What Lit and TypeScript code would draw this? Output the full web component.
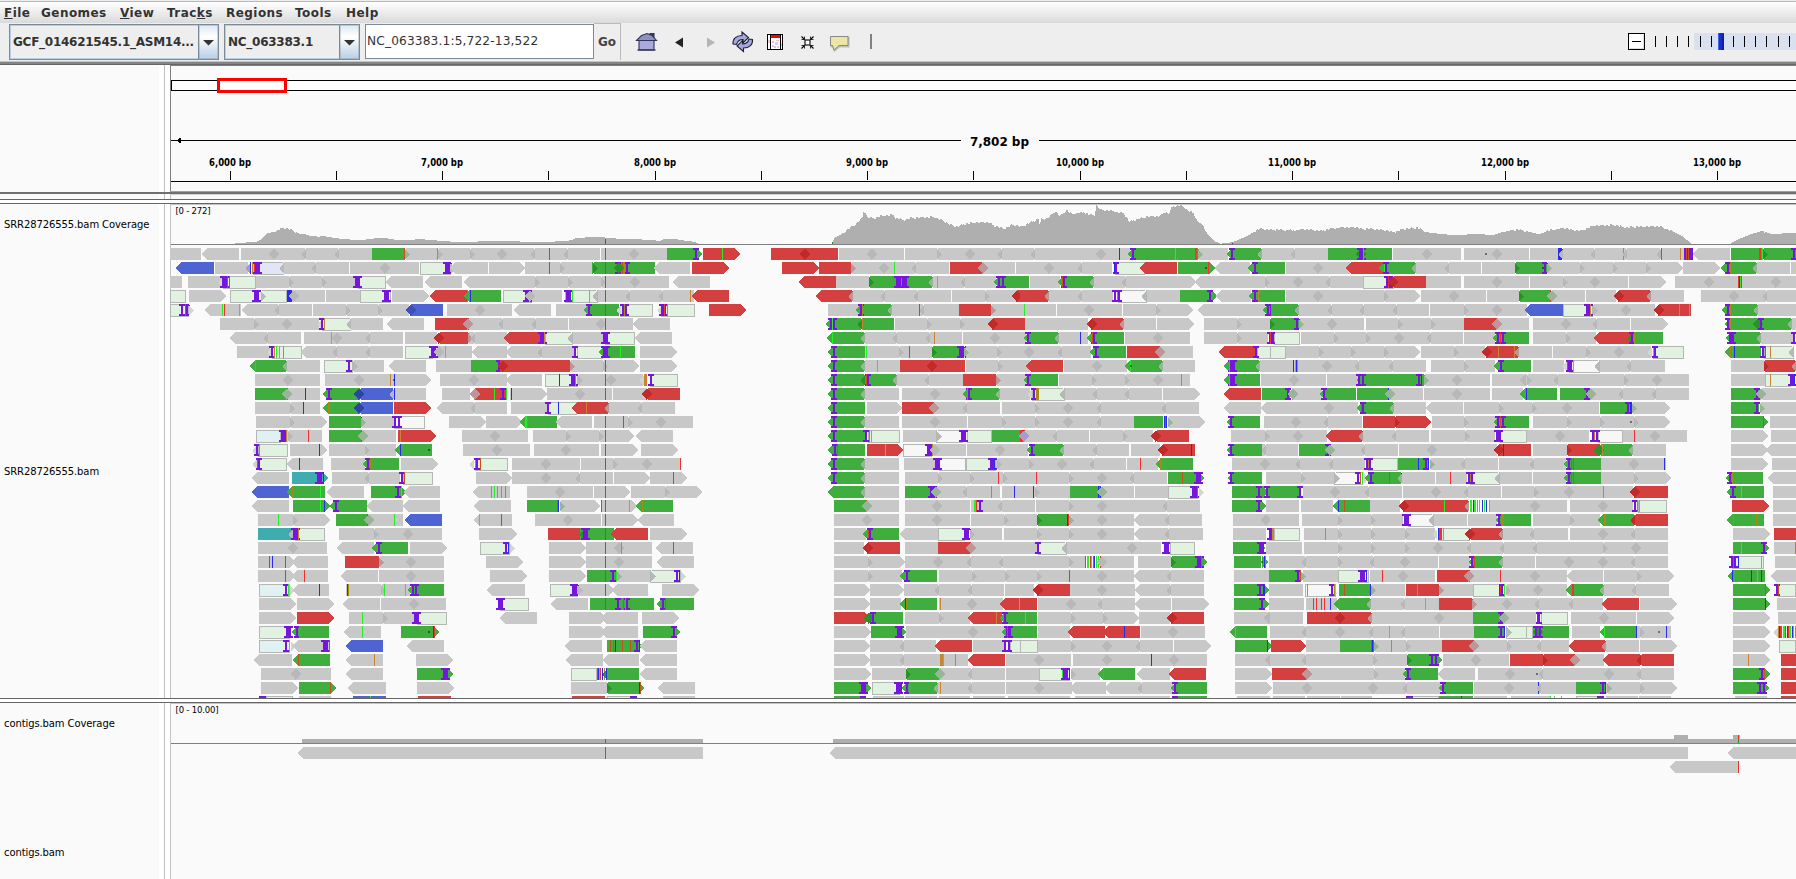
import { LitElement, html, css, svg } from "lit";
import { customElement } from "lit/decorators.js";

/* Packed alignments. Every tile has an x origin; coordinates are thirds of a pixel.
   n g r b t = solid reads, o v c w = outlined reads, < and > mark the strand tip,
   D L R = overlap marks, I W = insertions, k? = mismatches, q = small dot. */
const TILES: { x: number; rows: string[] }[] = [
  { x: 170, rows: [
    "n0-92 n<97-207 n213-606 D311 L408 L506 n703-900 g606-703 kd701 Rg705 ko802 R804",
    "b<18-132 n135-235 n341-537 n540-747 D645 L439 v250-341 Lv240 kb241 ko246 kr252 W260 L341 o751-842 n<850-900 W832 R843",
    "n0-36 n54-155 Lo158 o160-257 ko157 W163 kr170 kd178 n257-563 R357 R456 o563-647 W562 n<648-759 n<766-876 n<884-900",
    "o0-47 n57-168> o181-351 R273 W257 ky350 n355-465 kb352-366 D373 n468-570 o571-663 W649 n665-777> r<781-891 g891-900 LG897",
    "o0-58 I36 I52 kr46 Ro58 n<105-213 kg157 kr163 kg208 n<215-426 L327 n429-717 R527 R625 b<708-819 Db722 n831-900",
    "n150-448 R252 D350 n540-639 o457-543 Lo457 I455 ko462 L543 n<651-762 r795-900 Lr895",
    "n<180-393 L294 n402-699 kg484 D501 L600 n705-800 r<795-900 DX806",
    "n201-300 Lo305 o305-396 I306 ko313 kg319 kg326 ko338 n<393-699 L500 L600 n800-900 o706-790 W790 D806 kg826",
    "g<240-351 ko256 n351-450 Lg351 o463-549 I537 n549-642 R548 n<657-768 n798-900",
    "n255-450 D353 n465-666 D568 ko661 n666-783> kb673 q671 n810-900",
    "g255-351 n351-450 kr350 Dg352 kb406 g<459-570 I477 b<558-669 DB566 n672-768 L671 kb673 n816-900",
    "n255-450 R360 kb400 g<459-570 ky475 b<558-669 DB566 r672-783> n<801-900",
    "n258-470> R360 g477-573 n573-672 kb572 Rg573 w672-765 I675 I687 n837-900",
    "c259-333 W338 ko349 n351-456 R353 kr415 g477-573 n573-678 kr572 Dg578 r684-797> ko690 n876-900",
    "Lo262 o264-353 I260 ko267 n360-471> kb448 n477-678 R586 g<675-786 kb691 q777 n879-900",
    "Lo262 o268-350 kr262 I267 n<351-459 kb388 n483-585 g<579-687 I594 ky601 n693-804>",
    "n<246-357 t366-474> W448 kb458 n486-690 L597 o700-788 I697 kd703",
    "b<246-357 kd262 g<351-465 ky367 kg451 n<471-582 g603-708> I684 kg692 n<702-810",
    "n<246-357 g369-480> kg451 kb463 g<480-591 I498 n<591-699 n<700-810",
    "n264-480> R368 kg325 g498-594 n594-699 kb590 kr592 Dg597 kg673 b<705-816",
    "t264-366 o376-465 L368 W375 ko384 n507-816 R612 D713",
    "n264-471 D369 n<501-612 g<606-714 I627 n720-831>",
    "n264-375> n<366-474 kr298 kb307 kr346 r525-628 n628-822 Rr628 D724",
    "n264-375> n<366-474 kr346 kr403 n<513-624 n627-822 D724",
    "c268-359 I348 kg355 Ro360 n<369-477 kb448 n528-720 kb530 ky533 R634 kg643 kg706 g<714-822 I728 I739",
    "n267-378> n381-492> n<519-630 n633-828 D731",
    "n267-378> r381-492> n537-738 kg577 R640 o740-830 W739",
    "o268-360 kr350 W355 g<366-477 I381 ky388 n<522-633 kg577 g693-807> kb788 kr791 q777",
    "c268-360 I348 kg356 Ro362 n<369-477 W466 kd478 b<528-639 n<711-822",
    "n<252-366 g<369-480 kd385 n<528-639 ko613 n738-849>",
    "n273-483 D378 n<528-639 g741-849> W826",
    "n273-384> g387-498> kd481 n<534-648 n741-852>",
    "kp267-287 o287-368 n387-483 b549-648 kg601 r744-843" ] },
  { x: 450, rows: [
    "n0-450 R60 D157 L255 L354 kr298 n453-651 D553 g651-756> I739 r759-870> kg817 kR466",
    "n<0-114 n117-225> n226-427 kr298 R330 g426-615 RG428 kR466 I505 I530 kd517 ky522 DG508 n<612-720 r726-837>",
    "n0-36 n<42-657 R255 R353 R453 D555 kR466 n<669-780",
    "r0-50 g<42-153 kb61 o160-245 n245-336 W232 D240 o345-444 W355 kg365 kg418 L442 n444-732 L540 L639 kR466 ko721 r<726-837",
    "n0-186 D90 n<192-303 n318-414 g<402-507 I417 kR466 o510-609 Lo512 W521 ky521 Lo635 o634-734 W640 kr643 ko652 r777-888>",
    "r0-54 n57-354 Dr54 L159 L258 n357-549 D453 kR466 n<549-660",
    "r0-57 n57-171 Rr55 L75 r<162-270 o285-368 W275 ko283 L366 n368-460 o465-554 W466 n<555-666",
    "n0-66 n<66-171 n<168-372 L275 o380-460 I376 g<447-555 W466 kg511 n570-681>",
    "n0-63 g63-156 I147 kb154 r150-360 DX160 n360-568> Rr360 R460 kR466 n570-681>",
    "n0-171 D71 n<168-276 o286-384 kb328 W368 ky375 n384-580 R385 D484 kR466 Lo582 o600-684 ko582-592 I602",
    "r<60-171 Dr74 kg133 I160 kg168 n180-291> kb184 n291-486 D390 kR466 n489-590 r<579-690 DX590",
    "n0-171 L74 n183-290 o295-380 I295 kb325 n477-675 r<366-477 ko409 kR466 Lr477 L575",
    "n0-108> n108-216> g<210-321 kg226-231 ky232 n<318-426 n432-729 kR466 kr520 R533 D632",
    "n36-234 D135 n249-552> R348 R447 kR466 n<558-669",
    "n39-240 D140 n252-447 D349 n453-564> kR466 n573-684>",
    "Lo72 o75-173 ko75 I82 kd89 n186-390 D288 n393-690 R489 D591 kR466 kr691",
    "n78-186> n186-489 D289 L390 kR466 n492-600> n600-711> kr670",
    "n<69-180 ko124 kg133 ko142 ko154 ky166 n231-429 D331 n432-540> kR466 n543-756> R645",
    "n<72-183 g231-328 n331-450> kd320 kb325 Rg330 kr454 n456-560> kR466 kg538 g<558-669 ky577",
    "n<72-186 kg88 kr154 n255-453 D354 n456-565> kR466 n<564-672",
    "n87-201> r294-393 g390-492 LG402 W405 kR466 r<483-594 n600-711>",
    "o91-180 I167 kb174 Ro181 n297-408> n408-606 D507 kR466 ko514 n<618-729 kr670",
    "n108-219> n297-408> n408-606 D508 kR466 n<621-732",
    "n120-231> n297-408> g411-500 n502-600 kR466 I488 kg498 Rg500 o600-692 R603 I681 kb688 Ro693",
    "n<111-225 o301-384 n384-492> W373 R384 kR466 n<486-594 n636-747>",
    "o150-236 W149 n<303-414 g420-612 kR466 I505 I530 kd518 ky524 g<621-732 I638 kd645",
    "n<150-261 n357-468> n<454-564 n576-687>",
    "n357-468> n<454-564 g579-690> I672",
    "n<345-456 g471-576> kd481 kd490 kb496 kd517 kd541 I561 kb567 n<570-681",
    "n<348-459 n<459-567 n<570-681",
    "o363-440 kr440 kb444 kg447 kr451 kb457 ky461 g470-567 LG470 kb469 n<570-681",
    "n363-472 g471-582> RG472 kb566 kd569 n<624-735",
    "r366-465 o471-555 kp540-561 n639-735" ] },
  { x: 760, rows: [
    "r33-234 DX136 n237-433 D336 n436-840 R532 D631 L727 L823",
    "r66-177> r177-273 n273-567 Rr273 D373 kg403 L468 r570-667 n667-765 Dr668 n768-840",
    "r<117-228 n228-327 g327-519 RG327 W413 W432 n519-708 Lg519 kg532 L616 g<702-807 I718 I730 n810-840",
    "r<168-279 n279-573 Lr279 L374 L473 n576-770 R675 r<756-840 DX770",
    "n204-303 g<288-396 I303 ky307 n396-597 Lg396 kr478 L493 r597-693 n693-840 Rr693 kg793",
    "g<198-402 I213 I223 kg217 LG305 ko307 n405-700 R502 R600 r<684-795 DX699 n795-840 Lr795",
    "g<201-315 kg217 n315-607 Lg315 L410 L509 ko523 n609-798 D705 g<792-840 I804",
    "g<204-315 I222 n315-516 kg319 R418 kr448 g516-612 n612-840 RG516 W603 Rg612 R711 D808",
    "g<204-315 I222 n315-420 Lg315 kg352 r420-615 DX517 n618-810 R715 r<798-840",
    "g<204-411 I222 I323 LG315 kd318 n411-609 Lg411 L506 r609-708 n708-800 Rr708 g<792-840 I804",
    "g<204-315 I222 n315-417 Lg315 n426-620 D524 g<609-720 I627 ky620 n720-810 Lg720",
    "g<204-315 I222 n321-427> r426-522 n522-720 Dr523 L621 n726-840 R824",
    "g<204-315 I222 n315-417 Lg315 n426-621 n624-840 D524 R725",
    "g<204-315 I222 o325-419 I317 ky326 kg333 n429-528 w529-610 R531 o622-696 W610 g696-785 n795-840 kd781 kb788 kr793 D796",
    "g<204-315 I225 kd232 r321-430> kr364 kg376 w430-515 W506 ky517 n520-618 n621-804 D525 D719 g<804-840 I816",
    "g<204-315 I222 n315-417 Lg315 n432-525 w536-617 W531 o619-708 n708-840 W695 kb702 R710 R807",
    "g<204-315 I222 n315-417 Lg315 n435-840 R533 R630 R729 kr715 kr829",
    "g<204-315 n315-417 Lg315 g435-522 n525-720 W516 Dg528 L622 ko694 n726-840 kb763 kb820 R824",
    "g222-318 n318-417 kd317 Dg322 n435-630 n633-826 D532 kg641 kg644 kr649 I660 L727 n829-840",
    "n222-417 D320 n435-631 D532 n633-830 R733 g831-840",
    "n222-318 g<309-417 kd325 I330 n<420-533 o535-616 n630-726 W618 R630 n732-840 R828",
    "n222-312 r<309-420 DX323 n435-534 r534-633 n633-830 Dr632",
    "n222-434> R323 n435-840 D534 L633 L730",
    "n222-425 R323 g<420-531 I440 n537-840 R636 R735",
    "n222-330> n330-432> n432-732 L537 L635 n735-822 r<819-840",
    "n222-330> n331-424 g<420-531 kb436 ky439 n537-730 ko541 D635 r<720-831 kg778",
    "r222-330> g<318-429 DG326 I338 n435-630 R537 r<624-727 ko709 g<720-831 I734 kg796",
    "n222-333> g333-438> W416 kb424 n438-735 D639 g<726-831 W745 kr740",
    "n222-330> n330-528 L433 r<525-636 n639-732 o750-833 I735 I747",
    "n222-330> n330-625 L433 ko540-549 kg550 ko586 r<624-735 n738-840 L835",
    "n222-333> n336-438 g438-537 n537-735 RG438 Dg539 L635 n738-840",
    "g222-332> W310 o336-420 W414 kb422 g<426-534 I440 ky446 n534-735 Lg534 ko541 L636 n738-840 L835",
    "g222-318 kp300-318 n339-432 n435-531 n537-630 n640-735 n744-840" ] },
  { x: 1020, rows: [
    "n0-330 L45 D243 kb298 g<324-537 I338 kg466 kd526-532 n537-625 Rg534 g<621-726 I635 n726-810 Lg726",
    "n0-277 D86 L185 o285-375 I288 kb283 r<360-471 g474-585> kr564 q558 n<585-690 g<684-795 I705 n798-810",
    "g0-27 n30-120 g<114-222 I133 kd127 n222-527> Lg222 L318 n<525-810 R735",
    "r0-87 n87-280 Lr87 L187 w295-380 I285 ky292 I298 L378 n380-480 g480-592> I571 n<588-693 g<687-795 I705 ko714",
    "n0-109 kg13 n111-307 D208 n309-519> R408 n<534-735 g<729-810 I743",
    "n0-205 r0-15 r<201-312 DX216 n312-408 Lr312 n411-522> n552-750 R651 g750-810 RG750",
    "g<12-117 I24 n117-205 Lg117 kb181 g<201-312 I221 kd217 n315-510 D413 n552-745 R651 o762-810 W752 kr752",
    "n0-213 D27 L125 g<210-318 I228 r321-420 n420-519 Dr421 r<597-708 o712-797 I708",
    "r<18-129 n132-320 D230 g<315-429 kg331 q334 n429-525 Lg429 g<612-720 W635 ko626 n720-810 Lg720",
    "g<12-114 I24 n117-510 R216 R315 D413 ko484 g<612-720 W635 ko626 n723-810",
    "Lo36 o35-134 I41 ky47-57 L132 n134-426 L230 L328 n429-540> r<612-723 g726-810 I804",
    "n0-537 R45 D144 L243 L438 n<612-723 n<724-810",
    "n0-342 R45 D145 L243 g342-430 n443-555> kb432 kr435 kb439 Rg443 g<621-720 I634 n732-810",
    "kr0-8 kb8-12 n16-208 Dv13 L110 n210-400 R309 r<396-507 DX408 n633-810 R735",
    "g<21-132 I36 n132-327 Lg132 L230 n333-420 r<414-525 DX428 kb514 g<621-726 I634 n726-810 L738",
    "n0-318 R28 D125 L221 n321-415 kr361 g<408-519 ky421 n636-810 D735",
    "n0-441 kr49 R148 D245 L341 g444-552> kd487 W533 g<624-726 I633 n738-810",
    "n0-150 kb40 R45 g150-234 n246-343 kr236 kb233 kb240 Dg247 n345-444 o445-535 W521 kd530 Ro536 g636-735 I717 g<729-810 I740",
    "n0-45 n48-540 R148 D247 L440 g636-738> I717 n738-810",
    "n0-50 g51-145 n148-342 RG51 kb142 kr145 Rg148 D247 n<342-546 L448 n639-810 D738",
    "n0-342 R51 R148 D247 n<342-549 L448 n639-738 o748-810 I750 ko758",
    "n0-45 o55-140 I53 L138 n141-423 D335 W438 o450-524 g639-736> W722 n739-810",
    "n0-342 R148 kw195-243 kr196 kg201-206 kr209 kg214 kd218 kb221-226 kg229 kg235 kr241 D247 n354-453 g453-561> RG453 W538 kd543 g642-745> kw722 q726 kb731 ky735 n747-810",
    "n0-342 R51 kr148 D247 n<342-552 L452 n642-747 g747-810",
    "n0-40 r<39-150 DX53 n150-345 D247 n<345-552 L452 g642-747> I720 kb730-735 n747-810",
    "r0-51 n54-345 D152 L247 n<345-454 n456-567> g642-747> I727 n747-810",
    "g0-51 kg16 n54-357> R152 R250 n357-450 r<441-552 DX455 n642-747 n747-810 D746",
    "g0-51 n54-150 r<144-255 r<249-360 kb313 n363-555 D459 g<630-741 kg645 n753-810",
    "o0-53 n54-460 R152 D260 L359 n462-573> g645-756> kb740 r753-810",
    "n0-153 D56 n159-561 D262 kb394 D462 n645-810 D749",
    "n0-55 o58-150 n152-240 kg125 W136 kb146 R152 g<234-345 ky250 n<351-450 r<447-558 n645-755> r756-810",
    "n0-155 D56 n<150-258 n<255-460 L366 g<453-561 I465 n645-756> n759-810",
    "n0-150 n165-360 n360-450 g456-561 kp456-475 n651-750 n760-810" ] },
  { x: 1270, rows: [
    "n0-174 L75 g174-366 DG272 W272 ko280 n369-573 D472 n582-777 D682 q648 n780-810",
    "g0-45 n48-240 D145 r<228-338 g<327-438 kg343 I348 n438-633 Lg438 L536 n636-735 g735-810 RG735",
    "n0-280 D83 L180 o280-372 W355 kr355 r<357-468 DX370 n468-573 n582-777 D681 n780-810",
    "g0-45 n48-450> D145 R342 n453-648 D551 n651-747 g747-810 RG747",
    "g0-87 n87-477 kp0-3 Lg87 L185 L283 L380 n480-770 R582 D681 b<765-810",
    "g0-90 n90-282 RG0 I82 Rg87 D187 n288-582 R385 R483 r582-680 n680-777 Dr681 n789-810",
    "o12-90 I5 kr0 n93-579 R192 R289 D387 L482 n582-675 g<669-777 I684 I698 kr691 n789-810",
    "o0-47 n48-450> R147 R244 R342 n453-645 R552 n747-810 r<636-747 DX650 ko683 ko733 Lr747",
    "n0-468 kb70 kg74 kb78 ko82 D171 L268 L370 n483-675 R583 g<672-783 I692 n789-810",
    "n0-168 D71 n171-265 g<261-465 I268 I280 n465-660 I447 kb454 Rg461 D562 n666-810 D765",
    "g0-60 n66-155 I55 Dg68 g<150-258 I162 g261-357 n357-459 kb354 Dg360 n462-660 D562 n666-760 g<750-810 kb769",
    "n0-265 D176 g<261-372 kd273 I278 n372-468 Lg372 n<468-579 n582-810 R686 R789",
    "n0-276 D79 L175 r279-484> RX375 n486-680 R583 g<672-777 I684 I698 kd690 n789-810",
    "n0-170 D85 r<168-279 n279-477 Lr279 L378 n483-675 R584 o690-770 W685 n789-810",
    "n0-85 g87-175 n180-384 I174 Dg181 L284 n387-582 D486 n582-680 r<672-783 DX688 kb700 n789-810",
    "n0-285 L90 L188 o295-383 I290 ky295 I301 g383-475 n481-684 kb443 I467 kb475 Rg479 L585 n687-810",
    "n0-192 R93 w193-280 R195 I264 kd271 kg275 Ro281 g<285-396 I303 kd358 n396-495 kb394 Lg396 n498-590 kr541 o600-690 I596 ky601 I606 L688 n690-786 n789-810",
    "g0-92 I90 n98-396 D195 L297 n399-693 D498 L594 n696-810 R792",
    "n0-87 n93-190 n300-390 g<189-300 kb203 kd223 r<387-597 DX402 kg523 Lr597 kw597-660 kg599-606 kb608 kg611-617 ko622 kg628 kb637 kg642 kb648 kg656 n660-810 D795",
    "n0-87 n96-400 R205 R303 w415-491 W407 L489 n491-590 n593-680 g<678-783 I687 ky692-701 n789-810",
    "o12-90 kp0-5 ko7 n102-495 ko166 R205 R303 R405 Lo500 o503-600 kb504 kr508-516 kg520 n699-810 r<588-699 DX600 Lr699",
    "n0-96 n102-810 R205 R303 R405 D503 L604 L702",
    "n0-504 L108 R205 L312 D406 n507-600 g<597-699 I606 kd611 n699-795 Lg699 n798-810",
    "g0-90 I84 kd90 n99-205 Rg92 o205-298 W277 kb287 n300-495 kr337 D398 r501-600 n600-810 Dr598 kr691 D795",
    "n0-100 w106-198 ko110 I185 ky192 g207-303 n303-405 kd223 kb299 Rg304 r408-507 ko442 n507-610 Rr507 o610-705 n708-810 kb686 kr690 I697 kg703 R708",
    "n0-102 n108-200 kr130 kr139 kr154 kr163 kb181 g<192-303 ky208 n303-507 Lg303 L405 kg466 r507-610 n610-810 Rr607 D710",
    "n0-100 r111-306 DX209 n306-609 Lr306 D508 g609-695 n700-798 I693 Dg703 I803",
    "n0-507 D209 L108 L308 kg358 L405 n510-612 g612-702 I692 kb702 o709-790 R712 kr788 W797",
    "r3-108> n108-210 g210-306 n312-515 kr302 kb306 kr310 Rg312 ko364 R408 r516-612 n612-810 Dr613 R710",
    "n0-411 L108 R310 g411-516> I487 I497 RG411 n519-717 D617 r720-810 kr769",
    "r6-111 n111-405 Dr110 R312 g<399-504 I414 n<504-615 n624-810 D721 q802",
    "n9-514 D110 D310 L410 g<507-609 I519 n612-810 D716 kb805",
    "n12-105 n110-210 n213-305 o410-507 kp408-429 g507-609 kb574 n612-710 n723-810" ] },
  { x: 1526, rows: [
    "n0-9 n12-475 kb96-110 L110 L208 ko292 L304 kr406 L405 ko463 kp474-500 kd480 kd487 n<501-612 g615-810 kr699-704 kg707 RG712 I804",
    "g0-63 n63-471> q51 I57 Rg63 R162 R261 R360 n471-582> g<585-693 I606 ky612 n693-792 Lg693 n795-810",
    "n0-9 n12-306 R111 D208 n309-420> n447-810 D548 kr637 kb640 kg643 kr646 D751",
    "g0-75 n78-178 kr72 Dg78 n180-270 r<264-375 DX278 n375-474 Lr375 n525-810 D624 L722",
    "b<0-111 o111-201 n201-388 W186 ko193 R201 D300 r<384-495 DX398 ko460 ko490 g<588-696 I606 ky612 n696-810 Lg696",
    "n0-9 n21-312 D119 L214 n315-426> g<597-799 I606 ky612 DG695 I705 n799-810 Lg799",
    "g0-9 n21-210 R120 r<204-315 g315-411 LG317 I318 ky324 g<600-705 W614 n705-800 Lg705 I805",
    "n0-78 n81-375 R180 D278 Lo377 o382-473 kg380 I386 g<597-705 ky613 kb625 o714-803 I711 kr716 ko733 L801",
    "g0-15 n21-115 Lw122 w130-221 kr124 I128 I134 kg142 L219 n221-417 L315 n615-714 r714-810 RX714 Lr810",
    "n0-489 R3 L97 R295 D392 n615-717 o718-795 ko733 W798 kb804",
    "g0-93 kb1 g102-190 n193-489 I183 Dg195 L291 L390 g615-700 n708-810 I692 Dg705",
    "n0-219 R18 D122 g222-318 n318-432> I305 kb311 kb316 Rg319 g615-700 n702-810 I692 Rg703",
    "g0-9 n21-432> R123 R221 R323 q315 g615-726> kr710 n732-810",
    "n3-190 D101 w215-290 I200 ko203 I212 n290-483 kr323 D387 n615-726> n735-810",
    "r0-15 n21-123 r123-222 RX123 g<210-321 DG219 ko229 n321-420 Lg321 n615-725> n<720-810",
    "n0-120 L25 g<114-225 I129 kd136 kd142 n225-420 D323 kb415 n615-726> n738-810",
    "n0-18 n24-120 g<114-225 I129 kd136 kd142 n225-435> R324 g<600-711 I612 ky619 n<726-810",
    "n0-320 R25 D128 ko232 r<312-426 DX327 g<603-714 I621 kg646 n741-810",
    "n0-123 D26 n132-322 D230 o337-422 I327 ky334 kg340 r618-729> n741-810",
    "g0-15 n24-222 R132 g<216-327 ky233-239 r<315-426 LX326 g<603-714 ky620 ky689 n741-810",
    "n0-126 L25 n132-426 D230 L327 n621-732> r744-810",
    "n0-426 L34 R232 D329 g621-729> kg646 I714 n744-810 ky808",
    "n0-27 n30-426 D130 D230 L327 o618-713 W622 kr622 kb637 kg706 n747-810",
    "n0-123 D26 n<123-231 n234-444> R333 g<606-717 kb619 kb676 kg694 kb706 n<735-810",
    "n0-123 D36 g<120-234 kr138-144 n234-429 Lg234 L329 g621-732> kd716 o755-810 I752 kd757",
    "n0-230 L38 L142 r<228-339 n342-453> g621-732> kb718 n753-810",
    "n0-30 o45-125 I40 n135-330 D235 n333-444> n621-732> n756-810",
    "o0-20 kr20 g22-129 DG35 I30 I43 n138-222 n333-435 R341 g<222-330 kg235 kb329 kb421 q399 n621-732> Lo756 ko757 kb760 kr763-769 kg771-777 kr778 kb783 kr786 kg790-796 kb797 kg801 ko806",
    "n0-130 L44 r<129-240 n240-339 Lr240 n342-453> n621-732> o760-810",
    "r0-147 kr1 n147-235 RX52 Dr147 r<231-345 r<333-444 LX344 n621-732> ko667 r765-810",
    "n0-444 D248 L345 q34 L50 g621-732> I708 kd714 r765-810",
    "n0-150 kb37 L46 g150-240 n240-453> I231 kb238 Rg243 R342 g621-729> I703 I715 r765-810",
    "n12-72 kg72-76 kg84 kg105 o150-234 kp213-234 n240-336 n339-435 n627-723 r765-810" ] },
];

/* Coverage profile: tile origin, then x:y pairs in thirds of a pixel. */
const COVERAGE: [number, string][] = [
  [170, "195:129 257:126 265:122 275:115 283:107 290:100 300:98 318:93 328:87 340:84 357:88 365:91 372:94 380:98 390:103 403:102 420:108 445:110 458:108 480:112 500:115 530:118 570:120 600:117 620:114 650:115 680:120 705:121 750:117 790:121 830:123 850:127 899:127"],
  [450, "70:127 90:123 200:124 230:126 340:124 360:121 375:115 410:112 460:112 475:115 520:116 560:118 590:119 610:120 625:124 640:118 670:116 695:121 730:125 745:132"],
  [760, "217:132 220:115 235:107 250:97 270:83 290:69 300:60 307:50 308:36 315:36 320:51 345:55 360:47 400:45 405:54 430:60 450:54 490:52 520:51 530:55 550:63 570:74 590:80 610:73 640:68 685:67 700:77 730:86 755:75 785:80 800:72 820:64 835:55 838:80"],
  [1020, "62:58 80:55 105:35 120:48 137:30 155:42 190:37 205:43 222:45 228:16 240:28 280:32 290:38 310:40 327:65 350:58 380:50 420:48 433:35 445:42 455:20 480:16 490:20 500:30 520:40 530:62 550:80 560:100 585:125 600:131 620:129 640:125 680:108 715:87 760:89 809:90"],
  [1270, "62:92 100:88 150:93 180:86 220:82 260:82 275:88 300:85 340:90 370:97 400:87 440:83 470:97 520:103 560:105 620:102 670:105 700:95 740:89 767:93"],
  [1526, "0:93 40:103 60:93 110:84 160:93 200:77 260:75 300:82 340:80 400:79 440:95 470:110 495:132 611:132 620:125 650:112 680:100 710:94 740:103 770:100 812:100"],
];

const FILL: Record<string, string> = {
  n: "#c8c8c8", g: "#3fae3f", r: "#d43f3f", b: "#4e64d3", t: "#3fadb0",
  o: "#e1f2e1", v: "#e2e4f8", c: "#e0f1f3", w: "#f7f7f7",
};
const TICK: Record<string, string> = {
  r: "#f52f2f", R: "#e03030", b: "#2a2af0", g: "#25f025", o: "#c98433",
  y: "#a98a12", d: "#c9501c", p: "#7616dc", w: "#fafafa",
};
const MARK: Record<string, string> = {
  "": "#b8b8b8", g: "#98b598", r: "#bd9797", b: "#3c50bf", B: "#2a44a8", v: "#a79bc9",
  G: "#279327", X: "#c22a2a", o: "#cfd8cf", w: "#d8d8d8",
};

const TOKEN = /^([a-zA-Z]+)(<?)(\d+)(?:-(\d+)(>?))?$/;

function drawToken(token: string, ox: number, y: number) {
  const m = TOKEN.exec(token);
  if (!m) return svg``;
  const [, kind, left, a, b, right] = m;
  const x = Math.round(ox + +a / 3);
  const e = b ? Math.round(ox + +b / 3) : x;
  const c = y + 6;
  const head = kind[0];
  if (head === "k")
    return svg`<rect x=${x} y=${y} width=${Math.max(1, e - x)} height="12" fill=${TICK[kind[1]]}></rect>`;
  if (head === "q") return svg`<rect x=${x - 1} y=${c - 1} width="2" height="2" fill="rgba(0,0,0,.45)"></rect>`;
  if (head === "I" || head === "W") {
    const w = head === "I" ? 2 : 5;
    const s = w / 2 + 2.5;
    const l = Math.round(x - w / 2);
    return svg`<path fill="#7616dc" d=${`M${l - 2} ${y}h${2 * s - 1}v2h-2v8h2v2h-${2 * s - 1}v-2h2v-8h-2z`}></path>`;
  }
  if (head === "D" || head === "L" || head === "R") {
    const f = MARK[kind.slice(1)];
    if (head === "D")
      return svg`<path fill=${f} d=${`M${x - 5} ${c}l4.5-5h1l4.5 5v.8l-4.5 4.7h-1l-4.5-4.7z`}></path>`;
    const d = head === "L" ? -4.5 : 4.5;
    return svg`<path fill=${f} d=${`M${x} ${y + 1.5}l${d} 4.2v1l${-d} 4.3z`}></path>
      <path fill="#fafafa" d=${`M${head === "L" ? x - 1 : x} ${y}h1v1h-1zm0 11h1v1h-1z`}></path>`;
  }
  if ("ovcw".includes(head))
    return svg`<rect x=${x + 0.5} y=${y + 0.5} width=${e - x - 1} height="12" fill=${FILL[head]} stroke="#b4b8b4"></rect>`;
  const l = left ? x + 5 : x;
  const r = right ? e - 5 : e;
  let d = `M${l} ${y}H${r}`;
  if (right) d += `L${e} ${c - 0.6}v1.2`;
  d += `L${r} ${y + 12}H${l}`;
  if (left) d += `L${x} ${c + 0.6}v-1.2`;
  return svg`<path fill=${FILL[head]} d=${d + "z"}></path>`;
}

function coveragePath(): string {
  const pts: [number, number][] = [];
  for (const [ox, s] of COVERAGE)
    for (const p of s.split(" ")) {
      const [a, b] = p.split(":").map(Number);
      pts.push([ox + a / 3, 200 + b / 3]);
    }
  let d = `M${Math.round(pts[0][0])} 244`;
  let k = 0;
  for (let x = Math.round(pts[0][0]); x < 1796; x++) {
    while (k < pts.length - 2 && pts[k + 1][0] <= x) k++;
    const [x0, y0] = pts[k];
    const [x1, y1] = pts[k + 1];
    const t = Math.min(1, Math.max(0, (x - x0) / (x1 - x0)));
    const base = y0 + (y1 - y0) * t;
    const jitter = base < 232 ? (((x >> 1) * 37) % 5 - 2) * 0.4 : 0;
    d += `V${Math.min(244, Math.round(base + jitter))}H${x + 1}`;
  }
  return d + "V244z";
}

const TICKS = [6, 7, 8, 9, 10, 11, 12, 13];

@customElement("app-root")
export class AppRoot extends LitElement {
  static styles = css`
    :host {
      display: flex; flex-direction: column; width: 1796px; height: 879px; overflow: hidden;
      background: #fafafa; font-family: "DejaVu Sans", sans-serif; color: #333;
    }
    * { box-sizing: border-box; }
    svg { display: block; flex: none; }
    .menu {
      display: flex; align-items: center; height: 23px; flex: none; padding: 2px 0 0 4px;
      border-top: 1px solid #eee; font: bold 12px "DejaVu Sans", sans-serif; letter-spacing: .45px;
      background: linear-gradient(#b8b8b8 0 1px, #fff 1px, #dadada 22px);
    }
    .menu u { text-underline-offset: 1px; }
    .m0 { width: 37px } .m1 { width: 79px } .m2 { width: 47px } .m3 { width: 59px }
    .m4 { width: 69px } .m5 { width: 51px }
    .tools {
      display: flex; height: 38px; flex: none; background: #eee; padding: 1px 0 0 9px;
    }
    .combo {
      display: flex; height: 36px; border: 1px solid #7a8a99; margin-right: 5px;
      box-shadow: inset 0 0 0 1px #b8cfe5; font: bold 12px/34px "DejaVu Sans", sans-serif;
      letter-spacing: -.26px; overflow: hidden;
    }
    .combo span { flex: 1; min-width: 0; padding-left: 3px; white-space: nowrap; }
    .genome { width: 210px } .chrom { width: 136px }
    .drop {
      width: 20px; flex: none; border-left: 1px solid #7a8a99; display: flex;
      align-items: center; justify-content: center;
      background: linear-gradient(#dde8f3, #fff 35%, #b8cfe5);
      box-shadow: inset 0 0 0 1px rgba(122,138,153,.35);
    }
    .locus {
      width: 229px; height: 35px; background: #fff; border: 1px solid #7a8a99;
      font: 12.2px/33px "DejaVu Sans", sans-serif; letter-spacing: .14px; padding-left: 1px;
    }
    .go {
      width: 27px; height: 37px; border-right: 1px solid #bbb; border-top: 1px solid #bbb; margin-top: -1px;
      font: bold 12px/37px "DejaVu Sans", sans-serif; padding-left: 4px; color: #444;
    }
    .bar { height: 4px; flex: none; background: linear-gradient(#c4c4c4 0 1px, #848484 1px 3px, #666 3px); }
    .rule { height: 2px; flex: none; background: #707070; }
    .panel { display: flex; flex: none; }
    .head { height: 127px } .spacer { height: 5px } .reads { height: 494px } .contigs { height: 176px }
    .names {
      width: 165px; flex: none; display: flex; flex-direction: column; border-right: 1px solid #c0c0c0;
      background: linear-gradient(90deg, #fafafa 159px, #fff 159px);
      font: 10px/12px "DejaVu Sans", sans-serif; letter-spacing: -.1px; color: #000; padding-left: 4px;
    }
    .gutter { width: 5px; flex: none; background: #fff; }
    .strip { flex: 1; border-left: 1px solid #c4c4c4; border-top: 1px solid #d0d0d0; }
    .n1 { margin-top: 15px } .n2 { margin-top: 235px } .n3 { margin-top: 15px } .n4 { margin-top: 117px }
    .split { height: 5px; flex: none; background: #fff; border-top: 1px solid #666; border-bottom: 1px solid #666; }
    text { fill: #000; font-family: "DejaVu Sans", sans-serif; }
    .pos { font-size: 10px; font-weight: bold; }
    .span { font-size: 12px; font-weight: bold; }
    .range { font-size: 8.5px; }
  `;

  private drop() {
    return html`<div class="drop"><svg width="11" height="7"><path d="M0 1h11L5.5 6.5z" fill="#333"></path></svg></div>`;
  }

  private icons() {
    const scale = [1655, 1666, 1677, 1688, 1700, 1711, 1733, 1744, 1755, 1766, 1778, 1789];
    return html`<svg width="1175" height="37" viewBox="621 24 1175 37">
      <g stroke="#33365c" stroke-width="1.1" fill="#a9abd8">
        <path d="M650 38v-4.5h4v7z" fill="#3a3d66"></path>
        <path d="M639 40.5h15v9.5h-15z"></path>
        <path d="M636.5 40.5l5-5 5.500-2 5 2 4.500 5z" fill="#8e91c0"></path>
        <path d="M637.500 50h18" stroke-width="1.4"></path>
      </g>
      <path d="M675 42.500l8-5v10z" fill="#222"></path>
      <path d="M715 42.500l-8-5v10z" fill="#b5b5b5"></path>
      <g fill="#a5a8da" stroke="#20223c" stroke-width="1.1" stroke-linejoin="miter">
        <path d="M733 44c-.5-5 3-8.500 9-8.500v-3.500l6.500 5.500-5.500 5.500v-3.500c-3.500 0-5.500 1.500-6.500 5z"></path>
        <path d="M752.500 39.500c.5 5-3 8.500-9 8.500v3.500l-6.500-5.500 5.500-5.500v3.500c3.500 0 5.500-1.500 6.500-5z"></path>
      </g>
      <g shape-rendering="crispEdges">
        <rect x="767.500" y="34.500" width="15" height="15" fill="#fff" stroke="#000"></rect>
        <path d="M771 35h9v3h-9z" fill="#f00"></path>
        <path d="M770.500 35v14M780.500 35v14" stroke="#000"></path>
        <path d="M772 41h2v2h-2zM776 40h3v1h-3zM774 46h2v2h-2z" fill="#f7b8c0"></path>
        <path d="M775 42h3v3h-3zM772 45h2v2h-2zM777 46h2v2h-2z" fill="#cfd0fa"></path>
        <path d="M768 40h2v3h-2zM781 43h1v3h-1z" fill="#f9c8cc"></path>
      </g>
      <g stroke="#000" fill="none" stroke-width="1.1">
        <rect x="805" y="40" width="5" height="5" fill="#fff"></rect>
        <path d="M801.500 36.500l3 3M813.500 36.500l-3 3M801.500 48.500l3-3M813.500 48.500l-3-3"></path>
        <path d="M801.500 39.500h3v-3M813.500 39.500h-3v-3M801.500 45.500h3v3M813.500 45.500h-3v3" stroke-width=".8"></path>
      </g>
      <path d="M831.500 37.500h17v9h-9l-5 4-1.500-4h-1.500z" fill="none" stroke="#bdbdbd" stroke-width="2"></path>
      <path d="M830.500 36.500h17.500v9h-9l-5 4.500-1.500-4.500h-2z" fill="#ebe6a3" stroke="#888"></path>
      <path d="M870 34h2v15h-2z" fill="#808080"></path>
      <g shape-rendering="crispEdges">
        <rect x="1694" y="33" width="102" height="17" fill="#d9e0f0"></rect>
        <rect x="1628.500" y="33.500" width="16" height="16" fill="#fff" stroke="#000"></rect>
        <path d="M1643.500 35v14M1630 48.500h14" stroke="#ddd"></path>
        <path d="M1632 41.500h9" stroke="#000"></path>
        ${scale.map((x) => svg`<rect x=${x} y="36" width="1" height="11" fill="#000"></rect>`)}
        <path d="M1718 33h6v17h-6z" fill="#1530d0"></path>
        <path d="M1718 33h1v17h-1z" fill="#4a62f0"></path><path d="M1722 34h2v16h-2z" fill="#0c22a0"></path>
      </g>
    </svg>`;
  }

  private ruler() {
    return html`<svg width="1626" height="127" viewBox="170 65 1626 127" shape-rendering="crispEdges">
      <path d="M170 65H1796M170.500 65v127" stroke="#808080" fill="none"></path>
      <path d="M1796 80.500H171.500v10H1796" fill="#fff" stroke="#000"></path>
      <rect x="218.500" y="79.500" width="67" height="12" fill="#fff" stroke="#f00" stroke-width="3"></rect>
      <path d="M171 140.500H961M1039 140.500H1796M171 181.500H1796" stroke="#000"></path>
      <path d="M175 140h3v-1h1v-1h2v5h-2v-1h-1v-1h-3z" fill="#000"></path>
      <text class="span" x="970" y="146" textLength="59">7,802 bp</text>
      ${TICKS.map((k, i) => {
        const x = Math.round(230 + 212.45 * i);
        const w = k > 9 ? 48 : 42;
        return svg`<path d=${`M${x} 171h1v9h-1zM${Math.round(x + 106.2)} 171h1v9h-1z`} fill="#000"></path>
          <text class="pos" x=${x - w / 2} y="166" textLength=${w} lengthAdjust="spacingAndGlyphs">${k},000 bp</text>`;
      })}
      <path d="M170 191.500H1796" stroke="#a0a0a0"></path>
    </svg>`;
  }

  private alignments() {
    return html`<svg width="1626" height="494" viewBox="170 204 1626 494" shape-rendering="crispEdges">
      <path d="M170 204.500H1796M170.500 204v494" stroke="#c4c4c4" fill="none"></path>
      <path d=${coveragePath()} fill="#afafaf"></path>
      <path d="M171 244.500H1796" stroke="#808080"></path>
      <path d="M605 239h1v5h-1z" fill="#e02020"></path>
      <path d="M832 242h1v2h-1z" fill="#282"></path><path d="M1232 243h1v1h-1z" fill="#22f"></path>
      <text class="range" x="175.500" y="214" textLength="35">[0 - 272]</text>
      ${TILES.map((t) => t.rows.map((row, i) => row.split(" ").map((tok) => drawToken(tok, t.x, 248 + 14 * i))))}
    </svg>`;
  }

  private contigs() {
    return html`<svg width="1626" height="176" viewBox="170 703 1626 176" shape-rendering="crispEdges">
      <path d="M170 703.500H1796M170.500 703v176" stroke="#c4c4c4" fill="none"></path>
      <text class="range" x="175.500" y="713" textLength="43">[0 - 10.00]</text>
      <path d="M302 739h401v4h-401zM833 739h963v4h-963zM1674 735h14v4h-14zM1733 735h7v4h-7z" fill="#afafaf"></path>
      <path d="M171 743.500H1796" stroke="#808080"></path>
      <path d="M298 753l5-6H703v12H303zM830 753l5-6H1688v12H835zM1728 753l5-6H1796v12H1733zM1670 767l5-6H1738v12H1675z" fill="#c8c8c8"></path>
      <path d="M605 739h1v4h-1zM605 747h1v12h-1zM1738 735h1v4h-1zM1738 761h1v12h-1z" fill="#f03030"></path>
      <path d="M1738 739h1v4h-1z" fill="#0a9a0a"></path>
    </svg>`;
  }

  render() {
    return html`
      <div class="menu">
        <span class="m0"><u>F</u>ile</span><span class="m1">Genomes</span><span class="m2"><u>V</u>iew</span>
        <span class="m3">Trac<u>k</u>s</span><span class="m4">Regions</span><span class="m5">Tools</span><span>Help</span>
      </div>
      <div class="tools">
        <div class="combo genome"><span>GCF_014621545.1_ASM14...</span>${this.drop()}</div>
        <div class="combo chrom"><span>NC_063383.1</span>${this.drop()}</div>
        <div class="locus">NC_063383.1:5,722-13,522</div>
        <div class="go">Go</div>
        ${this.icons()}
      </div>
      <div class="bar"></div>
      <div class="panel head"><div class="names"></div><div class="gutter"></div>${this.ruler()}</div>
      <div class="rule"></div>
      <div class="panel spacer"><div class="names"></div><div class="gutter"></div><div class="strip"></div></div>
      <div class="split"></div>
      <div class="panel reads">
        <div class="names"><div class="n1">SRR28726555.bam Coverage</div><div class="n2">SRR28726555.bam</div></div>
        <div class="gutter"></div>${this.alignments()}
      </div>
      <div class="split"></div>
      <div class="panel contigs">
        <div class="names"><div class="n3">contigs.bam Coverage</div><div class="n4">contigs.bam</div></div>
        <div class="gutter"></div>${this.contigs()}
      </div>`;
  }
}
